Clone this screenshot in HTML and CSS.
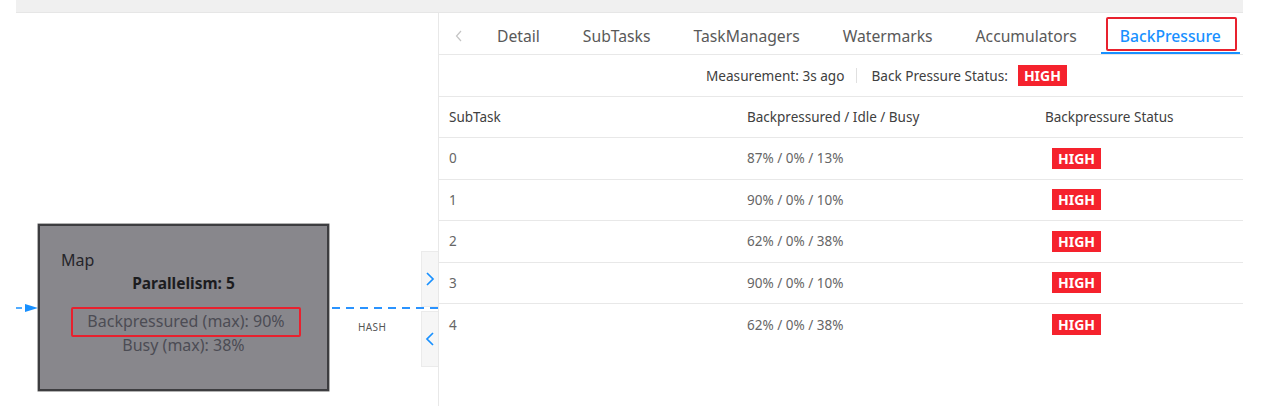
FILE: index.html
```html
<!DOCTYPE html>
<html>
<head>
<meta charset="utf-8">
<link rel="stylesheet" href="styles.css">
</head>
<body>
<div class="topbar"></div>
<div class="main">
  <div class="canvas">
    <div class="edge-in">
      <svg width="24" height="10" viewBox="0 0 24 10"><line x1="0" y1="5" x2="10" y2="5" stroke="#1890ff" stroke-width="1.5" stroke-dasharray="6 4"/><path d="M9 1 L22 5 L9 9 Z" fill="#1890ff"/></svg>
    </div>
    <div class="node">
      <div class="node-name">Map</div>
      <div class="node-par">Parallelism: 5</div>
      <div class="node-bp">Backpressured (max): 90%</div>
      <div class="node-busy">Busy (max): 38%</div>
    </div>
    <div class="edge-out"></div>
    <div class="edge-label">HASH</div>
    <div class="toggles">
      <div class="toggle"><svg width="10" height="16" viewBox="0 0 10 16"><path d="M2 2 L8 8 L2 14" fill="none" stroke="#1890ff" stroke-width="1.7"/></svg></div>
      <div class="toggle"><svg width="10" height="16" viewBox="0 0 10 16"><path d="M8 2 L2 8 L8 14" fill="none" stroke="#1890ff" stroke-width="1.7"/></svg></div>
    </div>
  </div>
  <div class="panel">
    <div class="tabs">
      <div class="tab-prev"><svg width="8" height="12" viewBox="0 0 8 12"><path d="M6 1 L1.5 6 L6 11" fill="none" stroke="#c4c4c4" stroke-width="1.2"/></svg></div>
      <div class="tab">Detail</div>
      <div class="tab">SubTasks</div>
      <div class="tab">TaskManagers</div>
      <div class="tab">Watermarks</div>
      <div class="tab">Accumulators</div>
      <div class="tab active">BackPressure</div>
    </div>
    <div class="measure">
      <span>Measurement: 3s ago</span>
      <span class="sep"></span>
      <span>Back Pressure Status:</span>
      <span class="badge">HIGH</span>
    </div>
    <div class="table">
      <div class="row head">
        <div class="c1">SubTask</div>
        <div class="c2">Backpressured / Idle / Busy</div>
        <div class="c3">Backpressure Status</div>
      </div>
      <div class="row"><div class="c1">0</div><div class="c2">87% / 0% / 13%</div><div class="c3"><span class="badge">HIGH</span></div></div>
      <div class="row"><div class="c1">1</div><div class="c2">90% / 0% / 10%</div><div class="c3"><span class="badge">HIGH</span></div></div>
      <div class="row"><div class="c1">2</div><div class="c2">62% / 0% / 38%</div><div class="c3"><span class="badge">HIGH</span></div></div>
      <div class="row"><div class="c1">3</div><div class="c2">90% / 0% / 10%</div><div class="c3"><span class="badge">HIGH</span></div></div>
      <div class="row last"><div class="c1">4</div><div class="c2">62% / 0% / 38%</div><div class="c3"><span class="badge">HIGH</span></div></div>
    </div>
  </div>
</div>
</body>
</html>
```

FILE: styles.css
```css
* { box-sizing: border-box; }
html, body { margin: 0; padding: 0; background: #fff; }
body {
  width: 1274px;
  height: 406px;
  overflow: hidden;
  font-family: "Noto Sans", "Open Sans", sans-serif;
  color: #595959;
}
.topbar {
  margin-left: 16px;
  width: 1227px;
  height: 13px;
  background: #f0f0f0;
  border-bottom: 1px solid #e6e6e6;
}
.main {
  display: flex;
  height: 393px;
}
.canvas {
  position: relative;
  width: 438px;
  flex: none;
}
.edge-in { position: absolute; left: 16px; top: 290px; line-height: 0; }
.node {
  position: absolute;
  left: 38px;
  top: 211px;
  width: 291px;
  height: 167px;
  background: #88878c;
  border: 2px solid #3d3d40;
  box-shadow: 0 0 0 0.5px #666;
}
.node-name {
  position: absolute;
  left: 21px;
  top: 23px;
  font-size: 16px;
  color: #25252a;
}
.node-par {
  position: absolute;
  left: 0; right: 0;
  top: 46px;
  text-align: center;
  font-size: 15.5px;
  font-weight: bold;
  color: #1c1c1f;
}
.node-bp {
  position: absolute;
  left: 31px;
  top: 81px;
  width: 230px;
  height: 30px;
  border: 2.5px solid #e8212e;
  border-radius: 2px;
  text-align: center;
  font-size: 16px;
  line-height: 24px;
  color: #4c4c54;
}
.node-busy {
  position: absolute;
  left: 0; right: 0;
  top: 108px;
  text-align: center;
  font-size: 16px;
  color: #4c4c54;
}
.edge-out {
  position: absolute;
  left: 332px;
  top: 294px;
  width: 106px;
  height: 2px;
  background: repeating-linear-gradient(90deg, #2a93ff 0 8px, transparent 8px 14px);
}
.edge-label {
  position: absolute;
  left: 358px;
  top: 307px;
  font-size: 10px;
  color: #555;
  letter-spacing: 0.4px;
}
.toggles {
  position: absolute;
  left: 421px;
  top: 238px;
  display: flex;
  flex-direction: column;
  gap: 4px;
}
.toggle {
  width: 17px;
  height: 56px;
  background: #f6f6f6;
  border: 1px solid #ebebeb;
  border-right: none;
  display: flex;
  align-items: center;
  justify-content: center;
}
.panel {
  width: 805px;
  flex: none;
  border-left: 1px solid #e8e8e8;
}
.tabs {
  display: flex;
  align-items: stretch;
  height: 42px;
  border-bottom: 1px solid #e8e8e8;
  gap: 5px;
}
.tab-prev {
  width: 34px;
  display: flex;
  align-items: center;
  justify-content: center;
  padding-left: 6px;
  padding-top: 4px;
}
.tab {
  position: relative;
  padding: 4px 19px 0;
  display: flex;
  align-items: center;
  font-size: 15.7px;
  color: #595959;
  white-space: nowrap;
}
.tab.active {
  color: #1890ff;
  font-weight: 500;
  border-bottom: 2px solid #1890ff;
  padding-top: 6px;
}
.tab.active::after {
  content: "";
  position: absolute;
  left: 5px;
  right: 3px;
  top: 4px;
  bottom: 1px;
  border: 2.5px solid #e8212e;
  border-radius: 2px;
}
.measure {
  height: 42px;
  border-bottom: 1px solid #e8e8e8;
  display: flex;
  align-items: center;
  padding-left: 267px;
  font-size: 13.6px;
  color: #404040;
}
.measure .sep {
  width: 1px;
  height: 15px;
  background: #e0e0e0;
  margin: 0 14px 0 12px;
}
.measure .badge { margin-left: 10px; }
.badge {
  display: inline-block;
  background: #f5222d;
  color: #fff;
  font-weight: bold;
  font-size: 14px;
  height: 21px;
  line-height: 21px;
  padding: 0 6px;
}
.row {
  display: flex;
  height: 41.5px;
  align-items: center;
  border-bottom: 1px solid #e8e8e8;
  font-size: 13.5px;
  color: #666;
}
.row.head { height: 41px; color: #404040; }
.row.last { border-bottom: none; }
.c1 { width: 298px; padding-left: 10px; }
.c2 { width: 298px; padding-left: 10px; }
.c3 { flex: 1; padding-left: 10px; }
.row .c3 .badge { margin-left: 7px; }
```
